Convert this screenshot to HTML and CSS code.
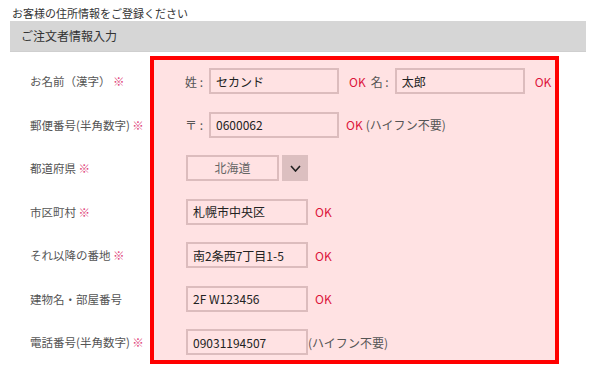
FILE: index.html
```html
<!DOCTYPE html>
<html lang="ja">
<head>
  <meta charset="UTF-8">
  <title>ご注文者情報入力</title>
  <link rel="stylesheet" href="styles.css">
</head>
<body>

  <p class="page-note">お客様の住所情報をご登録ください</p>
  <div class="section-head">ご注文者情報入力</div>

  <div class="order-form">
    <div class="label-col">
      <div class="row-label">お名前（漢字） <span class="req">※</span></div>
      <div class="row-label">郵便番号(半角数字) <span class="req">※</span></div>
      <div class="row-label">都道府県 <span class="req">※</span></div>
      <div class="row-label">市区町村 <span class="req">※</span></div>
      <div class="row-label">それ以降の番地 <span class="req">※</span></div>
      <div class="row-label">建物名・部屋番号</div>
      <div class="row-label">電話番号(半角数字) <span class="req">※</span></div>
    </div>

    <div class="field-box">
      <div class="field-row">
        <span class="pre">姓 :</span>
        <input class="inp wide" type="text" value="セカンド">
        <span class="ok first">OK</span>
        <span class="pre">名 :</span>
        <input class="inp wide" type="text" value="太郎">
        <span class="ok first">OK</span>
      </div>
      <div class="field-row">
        <span class="pre">〒 :</span>
        <input class="inp wide" type="text" value="0600062">
        <span class="ok">OK</span>
        <span class="hint">(ハイフン不要)</span>
      </div>
      <div class="field-row">
        <div class="pref-select">北海道</div>
        <div class="pref-btn">
          <svg width="11" height="7" viewBox="0 0 11 7"><path d="M1 1 L5.5 6 L10 1" fill="none" stroke="#222" stroke-width="1.6"/></svg>
        </div>
      </div>
      <div class="field-row">
        <input class="inp" type="text" value="札幌市中央区">
        <span class="ok">OK</span>
      </div>
      <div class="field-row">
        <input class="inp" type="text" value="南2条西7丁目1-5">
        <span class="ok">OK</span>
      </div>
      <div class="field-row">
        <input class="inp" type="text" value="2F W123456">
        <span class="ok">OK</span>
      </div>
      <div class="field-row">
        <input class="inp" type="text" value="09031194507">
        <span class="hint">(ハイフン不要)</span>
      </div>
    </div>
  </div>

</body>
</html>
```

FILE: styles.css
```css
body {
  margin: 0;
  padding: 0 14px 0 10px;
  font-family: "Noto Sans CJK JP", "Noto Sans", sans-serif;
  font-size: 12px;
  color: #333;
  background-color: #fff;
}
.page-note {
  margin: 0;
  padding: 5px 0 0 2px;
  height: 16px;
  font-size: 11px;
  line-height: 16px;
}
.section-head {
  height: 30px;
  line-height: 30px;
  padding-left: 11px;
  background-color: #d6d6d6;
  border-bottom: 1px solid #cfcfcf;
  font-size: 12px;
  color: #333;
}
.order-form {
  display: flex;
  margin-top: 4px;
}
.label-col {
  width: 140px;
  padding: 12px 0 0 20px;
  box-sizing: border-box;
  display: flex;
  flex-direction: column;
  gap: 17.5px;
}
.row-label {
  height: 26px;
  line-height: 26px;
  font-size: 11.5px;
  color: #555;
  white-space: nowrap;
}
.req {
  color: #e0457b;
}
.field-box {
  width: 409px;
  height: 308px;
  box-sizing: border-box;
  border: 4px solid #ff0000;
  background-color: #ffe2e3;
  padding: 8px 0 0 31px;
  display: flex;
  flex-direction: column;
  gap: 17.5px;
}
.field-row {
  display: flex;
  align-items: center;
  height: 26px;
  white-space: nowrap;
}
.field-row > * {
  flex-shrink: 0;
}
.pre {
  color: #555;
  width: 24px;
}
.inp {
  width: 122px;
  height: 26px;
  box-sizing: border-box;
  border: 2px solid #dcbcbd;
  background-color: #ffe2e3;
  padding: 0 5px;
  margin-left: 1px;
  font-family: "Noto Sans CJK JP", "Noto Sans", sans-serif;
  font-size: 12px;
  color: #222;
  outline: none;
}
.inp.wide {
  width: 130px;
  margin-left: 0;
}
.ok {
  color: #dc143c;
  margin: 0 4px 0 7px;
}
.ok.first {
  margin: 0 5px 0 10px;
}
.hint {
  color: #555;
}
.field-row .ok + .hint {
  margin-left: -1px;
}
.pref-select {
  width: 93px;
  height: 26px;
  box-sizing: border-box;
  border: 2px solid #dcbcbd;
  text-align: center;
  line-height: 22px;
  color: #666;
  margin-left: 1px;
}
.pref-btn {
  width: 26px;
  height: 26px;
  margin-left: 3px;
  background-color: #dcbfc0;
  display: flex;
  align-items: center;
  justify-content: center;
}
```
